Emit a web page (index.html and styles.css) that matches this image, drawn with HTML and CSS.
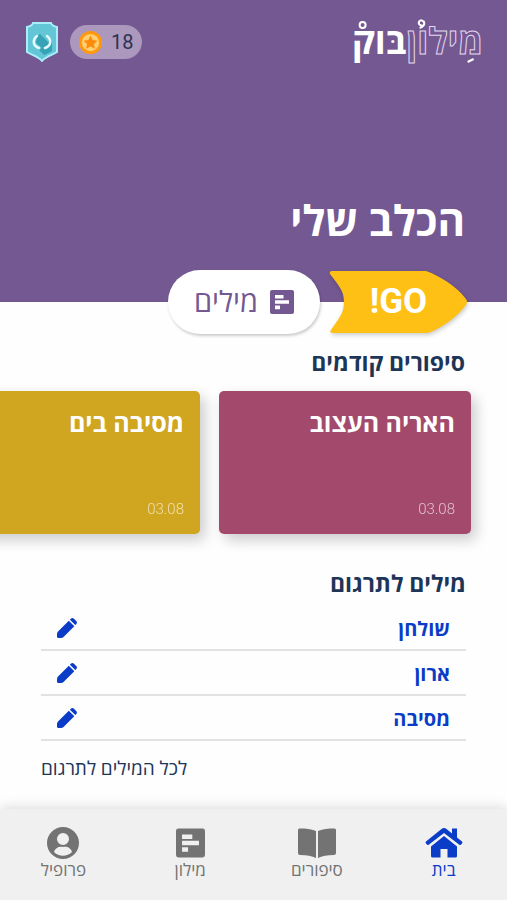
FILE: index.html
```html
<!DOCTYPE html>
<html lang="he" dir="rtl">
<head>
<meta charset="utf-8">
<meta name="viewport" content="width=device-width, initial-scale=1">
<title>מילון בוק</title>
<link rel="stylesheet" href="styles.css">
</head>
<body>
<svg class="sprite" aria-hidden="true">
  <symbol id="notes" viewBox="0 0 24 24"><path fill-rule="evenodd" d="M2 0h20a2 2 0 0 1 2 2v20a2 2 0 0 1-2 2H2a2 2 0 0 1-2-2V2a2 2 0 0 1 2-2zM5 5v3.600h8.500V5zM5 10.200v3.600h14v-3.600zM5 15.600v3.600h5v-3.600z"/></symbol>
  <symbol id="pencil" viewBox="0 0 20 20"><path d="M0 18.500V16q0-1.500 1-2.500L11.800 2.700l5.500 5.500L6.500 19q-1 1-2.500 1H1.500Q0 20 0 18.500zM12.900 1.700l.9-.9a2.300 2.300 0 0 1 3.200 0l2.200 2.200a2.300 2.300 0 0 1 0 3.200l-.9.900z"/></symbol>
</svg>
<header class="hero">
  <div class="topbar">
    <a class="logo" href="#"><span class="logo-outline">מילון</span><span class="logo-bold">בּוק</span>
      <svg class="logo-marks" viewBox="0 0 130 50" aria-hidden="true"><circle cx="10" cy="9" r="3"/><path d="M71 6a2.500 2.500 0 1 0-1 3M71 5c2 4-1 6-4 7M115 46l6-3"/></svg>
    </a>
    <div class="status">
      <div class="score">
        <span>18</span>
        <svg class="coin" viewBox="0 0 24 24" aria-hidden="true"><circle cx="12" cy="12" r="12" fill="#ff980f"/><circle cx="12" cy="12" r="9" fill="#ffd071"/><path fill="#ff8b0b" d="M12 4.800l2.200 4.600 5.100.7-3.700 3.500.9 5-4.500-2.400-4.500 2.400.9-5-3.700-3.500 5.100-.7z"/></svg>
      </div>
      <svg class="shield" viewBox="0 0 32 40" role="img" aria-label="תג"><path d="M7 1h18q1 3 6 4v25c-4 3-11 4-15 9C12 34 5 33 1 30V5q5-1 6-4z" fill="#62c6d6" stroke="#a9effa" stroke-width="2"/><path d="M11 14l3-2 8 8 4-1v10c-3 2-6 3-8 4l-5-5 3-2-6-5z" fill="#35a2b5"/><path d="M11 14c-5 4-4 10 2 12M21 14c5 4 4 10-2 12" fill="none" stroke="#e4fbff" stroke-width="2.500" stroke-linecap="round"/></svg>
    </div>
  </div>
  <h1>הכלב שלי</h1>
</header>
<main>
  <div class="actions">
    <button class="go" type="button">
      <svg class="go-shape" viewBox="0 0 137 62" preserveAspectRatio="none" aria-hidden="true"><path d="M2 0h94c14 5 30 15 40 28q2 3 0 6C126 47 112 57 98 62H2q-3-1-1-3C8 48 14 43 14 31S8 14 0 3q-1-3 2-3z"/></svg>
      <span>GO!</span>
    </button>
    <button class="words" type="button"><svg aria-hidden="true"><use href="#notes"/></svg><span>מילים</span></button>
  </div>
  <section class="stories">
    <h2>סיפורים קודמים</h2>
    <div class="cards">
      <a class="card plum" href="#"><h3>האריה העצוב</h3><time>03.08</time></a>
      <a class="card gold" href="#"><h3>מסיבה בים</h3><time>03.08</time></a>
    </div>
  </section>
  <section class="translate">
    <h2>מילים לתרגום</h2>
    <ul>
      <li><span>שולחן</span><button type="button" aria-label="עריכת שולחן"><svg><use href="#pencil"/></svg></button></li>
      <li><span>ארון</span><button type="button" aria-label="עריכת ארון"><svg><use href="#pencil"/></svg></button></li>
      <li><span>מסיבה</span><button type="button" aria-label="עריכת מסיבה"><svg><use href="#pencil"/></svg></button></li>
    </ul>
    <a class="all" href="#">לכל המילים לתרגום</a>
  </section>
</main>
<nav>
  <a class="current" href="#" aria-current="page"><svg class="wide" viewBox="0 0 38 32" aria-hidden="true"><path d="M19 9L32 19.500V29a1.500 1.500 0 0 1-1.500 1.500H22.500V22h-7v8.500H7.500A1.500 1.500 0 0 1 6 29v-9.500z"/><path d="M16.500 2q2.500-2 5 0L27 6.500V1.500h5v9l5 4q1 1 0 2l-1 1q-1 1-2 0L19 6 4 17.500q-1 1-2 0l-1-1q-1-1 0-2z"/></svg><span>בית</span></a>
  <a href="#"><svg class="wide" viewBox="0 0 38 32" aria-hidden="true"><path d="M1.500 1.500C8 1.500 13 2 18 4v27c-4-2-9-3-16-3q-2 0-2-2V3q0-1.500 1.500-1.500zM36.500 1.500C30 1.500 25 2 20 4v27c4-2 9-3 16-3q2 0 2-2V3q0-1.500-1.500-1.500z"/></svg><span>סיפורים</span></a>
  <a href="#"><svg class="medium" aria-hidden="true"><use href="#notes"/></svg><span>מילון</span></a>
  <a href="#"><svg class="round" viewBox="0 0 32 32" aria-hidden="true"><path fill-rule="evenodd" d="M16 0a16 16 0 1 0 0 32 16 16 0 0 0 0-32zm0 6a6 6 0 1 1 0 12 6 6 0 0 1 0-12zM7 25c1-4 5-6 9-5 4-1 8 1 9 5-5 5-13 5-18 0z"/></svg><span>פרופיל</span></a>
</nav>
</body>
</html>
```
FILE: styles.css
```css
* { box-sizing: border-box; }
body {
  margin: 0;
  min-height: 100vh;
  display: flex;
  flex-direction: column;
  background: #fefefe;
  color: #1d3557;
  font-family: Roboto, "Open Sans", "Noto Sans", sans-serif;
  overflow-x: hidden;
}
h1, h2, h3, ul { margin: 0; padding: 0; }
a { color: inherit; text-decoration: none; }
button { border: 0; padding: 0; background: none; font: inherit; color: inherit; cursor: pointer; }
svg { display: block; fill: currentColor; }
.sprite { position: absolute; width: 0; height: 0; }

.hero {
  height: 302px;
  padding: 16px 24px 52px 26px;
  background: #745892;
  color: #fff;
  display: flex;
  flex-direction: column;
  justify-content: space-between;
}
.topbar { display: flex; justify-content: space-between; align-items: center; }
.logo { position: relative; display: flex; font-size: 36px; line-height: 52px; font-weight: 700; }
.logo-outline { color: #745892; -webkit-text-stroke: 1px #e4d9ee; }
.logo-marks { position: absolute; top: 0; left: 0; width: 100%; height: 50px; fill: none; stroke: #fff; stroke-width: 2; }
.status { display: flex; align-items: center; gap: 12px; }
.score {
  display: flex;
  align-items: center;
  gap: 9px;
  height: 34px;
  padding: 0 9px;
  border-radius: 17px;
  background: #ac98bd;
  color: #2b3352;
  font-size: 20px;
}
.coin { width: 23px; height: 23px; }
.shield { width: 32px; height: 40px; }
h1 { padding: 0 18px; font-size: 42px; line-height: 56px; }

.actions { display: flex; gap: 10px; margin-top: -32px; padding: 0 40px; align-items: center; }
.go { position: relative; width: 137px; height: 62px; color: #fff; font-size: 35px; line-height: 58px; font-weight: 700; }
.go span { position: relative; }
.go-shape { position: absolute; inset: 0; width: 100%; height: 100%; fill: #fec015; filter: drop-shadow(1px 2px 2px #0003); overflow: visible; }
.words {
  display: flex;
  align-items: center;
  justify-content: center;
  gap: 12px;
  width: 152px;
  height: 64px;
  border-radius: 32px;
  background: #fff;
  color: #745892;
  font-size: 29px;
  line-height: 36px;
  box-shadow: 1px 2px 3px #0003;
}
.words svg { width: 24px; height: 24px; }

h2 { font-size: 23px; line-height: 30px; }
.stories { padding-top: 15px; }
.stories h2 { padding: 0 42px; }
.cards { display: flex; gap: 19px; padding: 12px 36px 32px; overflow: hidden; }
.card {
  flex: 0 0 252px;
  height: 143px;
  padding: 16px 16px 13px;
  border-radius: 5px;
  color: #fff;
  display: flex;
  flex-direction: column;
  justify-content: space-between;
  box-shadow: 5px 6px 14px #0003;
}
.plum { background: #a34a6c; }
.gold { background: #d0a520; }
h3 { font-size: 25px; line-height: 34px; }
time { font-size: 15px; line-height: 24px; font-weight: 300; opacity: .65; }

.translate { padding: 4px 41px 16px; }
ul { list-style: none; padding-top: 7px; }
li {
  display: flex;
  justify-content: space-between;
  align-items: center;
  height: 44px;
  margin-bottom: 1px;
  padding: 0 16px;
  border-bottom: 2px solid #e2e2e2;
  color: #0a3cc8;
  font-size: 20px;
  font-weight: 700;
}
li svg { width: 20px; height: 20px; }
.all { display: block; width: fit-content; margin: 15px auto 0 0; font-size: 19px; line-height: 26px; }

nav {
  margin-top: auto;
  height: 91px;
  padding: 18px 0 0;
  display: flex;
  justify-content: space-around;
  background: #f0f0f0;
  color: #737373;
  box-shadow: 0 -2px 12px #0002;
}
nav a { flex: 1; display: flex; flex-direction: column; align-items: center; font-size: 17px; line-height: 20px; }
nav svg { height: 32px; margin-bottom: 1px; }
nav .wide { width: 38px; }
nav .medium { width: 29px; }
nav .round { width: 32px; }
nav .current { color: #0a3cc8; }
```
